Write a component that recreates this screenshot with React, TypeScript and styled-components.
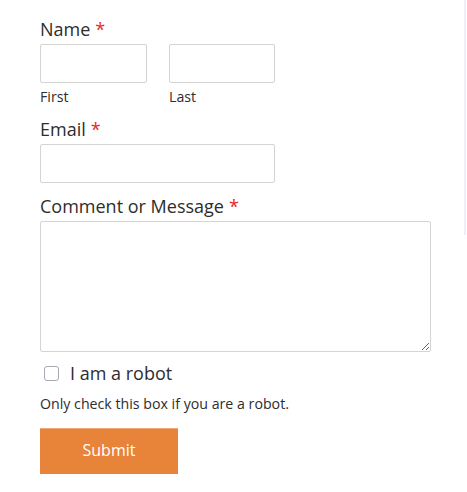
import styled, { createGlobalStyle } from 'styled-components'

const GlobalStyle = createGlobalStyle`
  body {
    margin: 0;
    background: #ffffff;
    font-family: 'Open Sans', 'Noto Sans', sans-serif;
    color: #2d2d2d;
  }
`

const Page = styled.div`
  display: flex;
  justify-content: space-between;
  width: 467px;
  height: 492px;
  overflow: hidden;
`

const Form = styled.form`
  padding: 18px 0 0 40px;
  display: flex;
  flex-direction: column;
  align-items: flex-start;
`

const EdgeLine = styled.div`
  width: 2px;
  height: 235px;
  margin-right: 1px;
  background: #eeeefa;
`

const Field = styled.div<{ gap: number }>`
  display: flex;
  flex-direction: column;
  margin-top: ${(props) => props.gap}px;
`

const Label = styled.label`
  font-size: 18px;
  line-height: 22px;
  margin-bottom: 4px;
`

const Required = styled.span`
  color: #e8281e;
  margin-left: 5px;
`

const NameRow = styled.div`
  display: flex;
  gap: 22px;
`

const SubField = styled.div`
  display: flex;
  flex-direction: column;
`

const Input = styled.input<{ width: number }>`
  box-sizing: border-box;
  width: ${(props) => props.width}px;
  height: 39px;
  border: 1px solid #d4d4d4;
  border-radius: 2px;
  padding: 0 8px;
  font: inherit;
  margin: 0;
`

const SubLabel = styled.span`
  font-size: 14.2px;
  line-height: 20px;
  margin-top: 4px;
`

const TextArea = styled.textarea`
  box-sizing: border-box;
  width: 391px;
  height: 131px;
  border: 1px solid #d4d4d4;
  border-radius: 2px;
  padding: 8px;
  font: inherit;
  margin: 0;
`

const CheckRow = styled.label`
  display: flex;
  align-items: center;
  gap: 11px;
  margin-top: 10px;
  padding-left: 4px;
  font-size: 18px;
  line-height: 22px;
`

const Box = styled.span`
  box-sizing: border-box;
  width: 15px;
  height: 15px;
  border: 1.5px solid #a9a9b4;
  border-radius: 3px;
`

const Help = styled.p`
  margin: 10px 0 0;
  font-size: 14.2px;
  line-height: 20px;
`

const SubmitButton = styled.button`
  margin-top: 14px;
  width: 138px;
  height: 46px;
  border: none;
  box-shadow: inset 0 1px 0 #f0a878;
  background: #e8833a;
  color: #ffffff;
  font-family: inherit;
  font-size: 16px;
  line-height: 22px;
  padding: 0 0 2px;
  cursor: pointer;
`

export default function App() {
  return (
    <>
      <GlobalStyle />
      <Page>
        <Form onSubmit={(e) => e.preventDefault()}>
          <Field gap={0}>
            <Label>Name<Required>*</Required></Label>
            <NameRow>
              <SubField>
                <Input width={107} />
                <SubLabel>First</SubLabel>
              </SubField>
              <SubField>
                <Input width={106} />
                <SubLabel>Last</SubLabel>
              </SubField>
            </NameRow>
          </Field>
          <Field gap={11}>
            <Label>Email<Required>*</Required></Label>
            <Input width={235} type="email" />
          </Field>
          <Field gap={12}>
            <Label>Comment or Message<Required>*</Required></Label>
            <TextArea />
          </Field>
          <CheckRow>
            <Box />
            I am a robot
          </CheckRow>
          <Help>Only check this box if you are a robot.</Help>
          <SubmitButton type="submit">Submit</SubmitButton>
        </Form>
        <EdgeLine />
      </Page>
    </>
  )
}
